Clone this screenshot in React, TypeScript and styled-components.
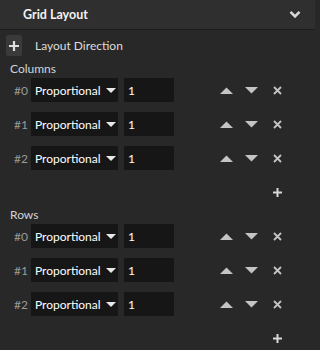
import React from "react";
import styled, { createGlobalStyle } from "styled-components";

const Global = createGlobalStyle`
  html, body { margin: 0; padding: 0; background: #282828; }
  body { width: 320px; height: 350px; overflow: hidden; font-family: "Lato", "Liberation Sans", sans-serif; }
`;

const Page = styled.div`
  width: 320px;
  height: 350px;
  background: #282828;
  display: flex;
  flex-direction: column;
`;

const Header = styled.div`
  width: 315px;
  height: 30px;
  box-sizing: border-box;
  background: #2f2f2f;
  border-bottom: 1px solid #1c1c1c;
  display: flex;
  align-items: center;
  justify-content: space-between;
  padding: 0 14px 0 23px;
`;

const Title = styled.span`
  color: #f2f2f2;
  font-weight: 700;
  font-size: 12.5px;
`;

const DirRow = styled.div`
  display: flex;
  align-items: center;
  gap: 13px;
  padding: 5px 0 0 6px;
  height: 21px;
`;

const SmallButton = styled.div`
  width: 16px;
  height: 21px;
  border-radius: 2px;
  background: #3a3a3a;
  display: flex;
  align-items: center;
  justify-content: center;
`;

const Label = styled.span`
  color: #dcdcdc;
  font-size: 12px;
`;

const Section = styled.div<{ $top: number }>`
  display: flex;
  flex-direction: column;
  margin-top: ${(p) => p.$top}px;
`;

const SectionTitle = styled.div`
  color: #d0d4da;
  font-size: 12px;
  padding-left: 10px;
  height: 16px;
  line-height: 16px;
`;

const Rows = styled.div`
  display: flex;
  flex-direction: column;
  gap: 10px;
  margin-top: 1px;
`;

const Row = styled.div`
  display: flex;
  align-items: center;
  height: 24px;
`;

const Index = styled.span`
  width: 31px;
  box-sizing: border-box;
  text-align: right;
  padding-right: 3px;
  color: #9a9a9a;
  font-size: 12px;
`;

const Select = styled.div`
  width: 87px;
  height: 24px;
  box-sizing: border-box;
  background: #161616;
  display: flex;
  align-items: center;
  justify-content: space-between;
  padding: 0 2px 0 4px;
  color: #ffffff;
  font-size: 12px;
`;

const Input = styled.div`
  width: 50px;
  height: 24px;
  margin-left: 6px;
  box-sizing: border-box;
  background: #161616;
  display: flex;
  align-items: center;
  padding-left: 4px;
  color: #ffffff;
  font-size: 12px;
`;

const Actions = styled.div`
  margin-left: 40px;
  display: flex;
  align-items: center;
`;

const IconSlot = styled.div<{ $w: number }>`
  width: ${(p) => p.$w}px;
  height: 24px;
  display: flex;
  align-items: center;
  justify-content: center;
`;

const AddRow = styled.div`
  display: flex;
  justify-content: flex-end;
  padding-right: 38px;
  margin-top: 10px;
  height: 24px;
  align-items: center;
`;

const ICON = "#c4c4c4";

const Chevron = () => (
  <svg width="12" height="9" viewBox="0 0 12 9">
    <path d="M1.5 1.8 L6 6.3 L10.5 1.8" fill="none" stroke="#d8d8d8" strokeWidth="2.6" />
  </svg>
);

const Plus = ({ c = "#d0d0d0", s = 9 }: { c?: string; s?: number }) => (
  <svg width={s} height={s} viewBox="0 0 9 9">
    <path d="M4.5 0 V9 M0 4.5 H9" stroke={c} strokeWidth="2" />
  </svg>
);

const Caret = () => (
  <svg width="10" height="5" viewBox="0 0 10 5">
    <path d="M0 0 H10 L5 5 Z" fill="#e8e8e8" />
  </svg>
);

const Up = () => (
  <svg width="13" height="7" viewBox="0 0 13 7">
    <path d="M0 7 H13 L6.5 0.5 Z" fill={ICON} />
  </svg>
);

const Down = () => (
  <svg width="13" height="7" viewBox="0 0 13 7">
    <path d="M0 0 H13 L6.5 6.5 Z" fill={ICON} />
  </svg>
);

const Close = () => (
  <svg width="9" height="9" viewBox="0 0 9 9">
    <path d="M1 1 L8 8 M8 1 L1 8" stroke={ICON} strokeWidth="1.8" />
  </svg>
);

const ItemRow = ({ i }: { i: number }) => (
  <Row>
    <Index>#{i}</Index>
    <Select>
      <span>Proportional</span>
      <Caret />
    </Select>
    <Input>1</Input>
    <Actions>
      <IconSlot $w={25}><Up /></IconSlot>
      <IconSlot $w={25}><Down /></IconSlot>
      <IconSlot $w={26}><Close /></IconSlot>
    </Actions>
  </Row>
);

const Block = ({ title, top }: { title: string; top: number }) => (
  <Section $top={top}>
    <SectionTitle>{title}</SectionTitle>
    <Rows>
      {[0, 1, 2].map((i) => (
        <ItemRow key={i} i={i} />
      ))}
    </Rows>
    <AddRow>
      <Plus c="#d8d8d8" />
    </AddRow>
  </Section>
);

export default function App() {
  return (
    <Page>
      <Global />
      <Header>
        <Title>Grid Layout</Title>
        <Chevron />
      </Header>
      <DirRow>
        <SmallButton>
          <Plus c="#e0e0e0" s={10} />
        </SmallButton>
        <Label>Layout Direction</Label>
      </DirRow>
      <Block title="Columns" top={5} />
      <Block title="Rows" top={3} />
    </Page>
  );
}
